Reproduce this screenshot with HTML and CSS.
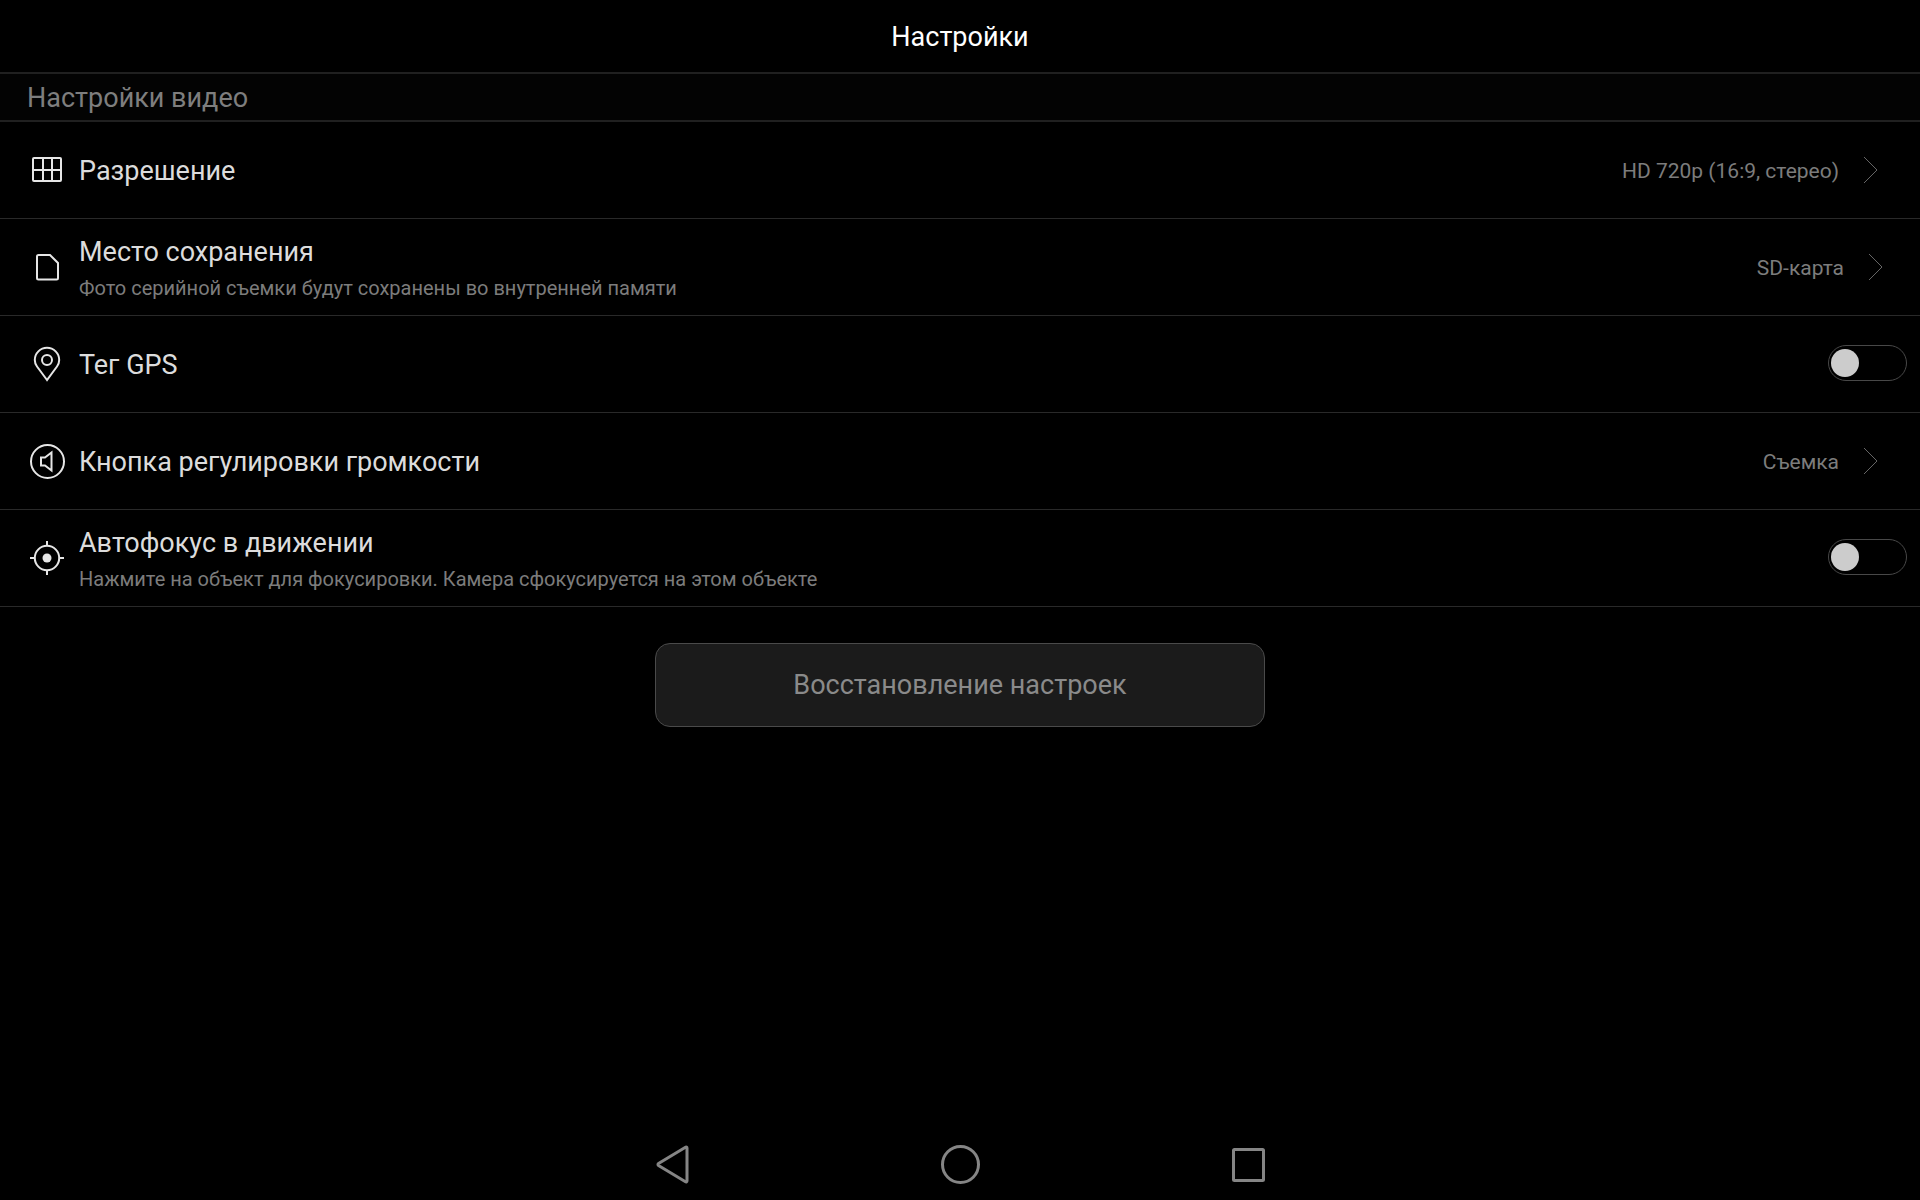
FILE: index.html
```html
<!DOCTYPE html>
<html lang="ru">

<head>
    <meta charset="UTF-8">
    <meta name="viewport" content="width=device-width, initial-scale=1.0">
    <title>Настройки</title>
    <link rel="stylesheet" href="styles.css">
</head>

<body>
    <header class="header">
        <h1>Настройки</h1>
    </header>

    <main class="main">
        <h2 class="section">Настройки видео</h2>
        <ul class="list">
            <li>
                <a class="row" href="#resolution">
                    <svg class="icon" viewBox="0 0 36 36">
                        <rect x="4" y="6" width="28" height="23" rx="1" />
                        <path d="M14 6v23M23 6v23M4 18h28" />
                    </svg>
                    <span class="text">
                        <span class="title">Разрешение</span>
                    </span>
                    <span class="value">HD 720p (16:9, стерео)</span>
                    <svg class="arrow" viewBox="0 0 16 28">
                        <path d="M1 1l13 13L1 27" />
                    </svg>
                </a>
            </li>
            <li>
                <a class="row row-storage" href="#storage">
                    <svg class="icon" viewBox="0 0 36 36">
                        <path d="M9.5 6H21l8 8v15a1.5 1.5 0 0 1-1.500 1.500h-18A1.500 1.500 0 0 1 8 29V7.500A1.500 1.500 0 0 1 9.500 6z" />
                    </svg>
                    <span class="text">
                        <span class="title">Место сохранения</span>
                        <span class="desc">Фото серийной съемки будут сохранены во внутренней памяти</span>
                    </span>
                    <span class="value">SD-карта</span>
                    <svg class="arrow" viewBox="0 0 16 28">
                        <path d="M1 1l13 13L1 27" />
                    </svg>
                </a>
            </li>
            <li>
                <label class="row row-switch">
                    <svg class="icon" viewBox="0 0 36 36">
                        <path d="M18 34L8 20.500C6.500 18.500 5.800 16.500 5.800 14a12.200 12.200 0 0 1 24.400 0c0 2.500-.7 4.500-2.200 6.500z" />
                        <circle cx="18" cy="14" r="5" />
                    </svg>
                    <span class="text">
                        <span class="title">Тег GPS</span>
                    </span>
                    <input class="switch" type="checkbox">
                </label>
            </li>
            <li>
                <a class="row" href="#volume">
                    <svg class="icon" viewBox="0 0 36 36">
                        <circle cx="18.500" cy="18.500" r="16.500" />
                        <path d="M12 14.500h4l6.500-5v18l-6.500-5h-4z" />
                    </svg>
                    <span class="text">
                        <span class="title">Кнопка регулировки громкости</span>
                    </span>
                    <span class="value">Съемка</span>
                    <svg class="arrow" viewBox="0 0 16 28">
                        <path d="M1 1l13 13L1 27" />
                    </svg>
                </a>
            </li>
            <li>
                <label class="row row-switch">
                    <svg class="icon" viewBox="0 0 36 36">
                        <circle cx="18" cy="18" r="12.200" />
                        <circle class="dot" cx="18" cy="18" r="4.500" />
                        <path d="M18 1v5M18 30v5M1 18h5M30 18h5" />
                    </svg>
                    <span class="text">
                        <span class="title">Автофокус в движении</span>
                        <span class="desc">Нажмите на объект для фокусировки. Камера сфокусируется на этом объекте</span>
                    </span>
                    <input class="switch" type="checkbox">
                </label>
            </li>
        </ul>
        <button class="reset" type="button">Восстановление настроек</button>
    </main>

    <nav class="navbar">
        <button type="button" aria-label="Назад">
            <svg viewBox="0 0 42 42">
                <path d="M36 5v33a1 1 0 0 1-1.500.8L7.500 22.500a1.200 1.200 0 0 1 0-2L34.500 4.200A1 1 0 0 1 36 5z" />
            </svg>
        </button>
        <button type="button" aria-label="Домой">
            <svg viewBox="0 0 42 42">
                <circle cx="21.500" cy="21.500" r="18" />
            </svg>
        </button>
        <button type="button" aria-label="Недавние">
            <svg viewBox="0 0 42 42">
                <rect x="6.500" y="6.500" width="30" height="31" rx="1" />
            </svg>
        </button>
    </nav>
</body>

</html>
```
FILE: styles.css
```css
* {
    box-sizing: border-box;
}

body {
    display: flex;
    flex-direction: column;
    min-height: 100vh;
    margin: 0;
    background-color: #000;
    color: #dcdcdc;
    font-family: Roboto, "Noto Sans", sans-serif;
    font-size: 27px;
}

.header {
    display: flex;
    align-items: center;
    justify-content: center;
    height: 74px;
    padding-top: 2px;
    border-bottom: 2px solid #202020;
}

h1,
h2 {
    margin: 0;
    font-size: 27px;
    font-weight: 400;
}

h1 {
    color: #fff;
}

.main {
    flex: 1;
}

.section {
    height: 48px;
    padding-left: 27px;
    border-bottom: 2px solid #202020;
    background-color: #030303;
    color: #7e7e7e;
    line-height: 48px;
}

.list {
    margin: 0;
    padding: 0;
    list-style: none;
}

.row {
    display: flex;
    align-items: center;
    height: 97px;
    padding: 0 41px 0 29px;
    border-bottom: 1px solid #292929;
    color: inherit;
    text-decoration: none;
}

.row-storage {
    padding-right: 36px;
}

.row-switch {
    padding-right: 13px;
}

.icon {
    width: 36px;
    height: 36px;
    margin-right: 14px;
    fill: none;
    stroke: #e6e6e6;
    stroke-width: 2;
}

.icon .dot {
    fill: #e6e6e6;
    stroke: none;
}

.text {
    display: flex;
    flex: 1;
    flex-direction: column;
    padding-top: 2px;
}

.title {
    line-height: 40px;
}

.desc {
    color: #7c7c7c;
    font-size: 20px;
    line-height: 32px;
}

.value {
    margin-right: 24px;
    padding-top: 2px;
    color: #7c7c7c;
    font-size: 21px;
}

.arrow {
    width: 16px;
    height: 28px;
    fill: none;
    stroke: #666;
    stroke-width: 1;
}

.switch {
    appearance: none;
    width: 79px;
    height: 36px;
    margin: 0 0 2px;
    padding: 3px 2px;
    border: 1px solid #484848;
    border-radius: 18px;
}

.switch::before {
    display: block;
    width: 28px;
    height: 28px;
    border-radius: 50%;
    background-color: #ccc;
    content: "";
}

.switch:checked::before {
    margin-left: auto;
}

.reset {
    display: block;
    width: 610px;
    max-width: 90%;
    height: 84px;
    margin: 36px auto;
    border: 1px solid #4a4a4a;
    border-radius: 15px;
    background-color: #1b1b1b;
    color: #8a8a8a;
    font: inherit;
}

.navbar {
    display: flex;
    justify-content: center;
    height: 72px;
}

.navbar button {
    display: flex;
    align-items: center;
    justify-content: center;
    width: 15%;
    padding: 0;
    border: 0;
    background: none;
}

.navbar svg {
    width: 42px;
    height: 42px;
    fill: none;
    stroke: #858585;
    stroke-width: 3;
}
```
